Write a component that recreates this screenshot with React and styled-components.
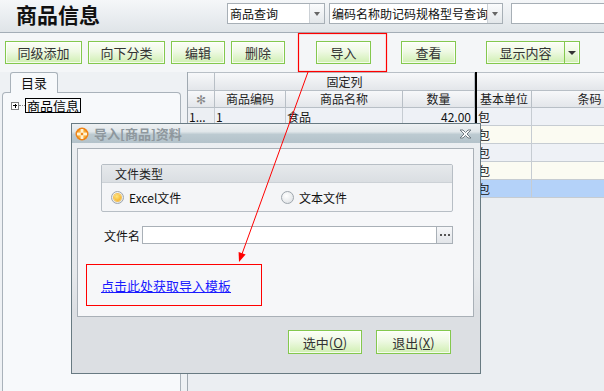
import React from 'react';
import styled, { createGlobalStyle } from 'styled-components';

const FONT = `"Noto Sans CJK SC", "Noto Sans", "DejaVu Sans", sans-serif`;

const GlobalStyle = createGlobalStyle`
  html, body { margin: 0; padding: 0; }
  body { font-family: ${FONT}; font-size: 12px; color: #222; background: #f4f6f8; }
  * { box-sizing: border-box; }
`;

const Screen = styled.div`
  position: relative;
  width: 604px;
  height: 391px;
  overflow: hidden;
  background: #f4f6f8;
`;

/* ---------- header ---------- */
const Header = styled.header`
  height: 33px;
  display: flex;
  align-items: flex-start;
  border-bottom: 1px solid #a3adb6;
  background: linear-gradient(#f5f7f9, #dfe4e8);
`;
const Title = styled.h1`
  flex: 0 0 227px;
  height: 30px;
  margin: 0;
  padding-left: 16px;
  font-size: 21px;
  font-weight: bold;
  line-height: 28px;
  color: #111;
  white-space: nowrap;
`;
const ComboBox = styled.div`
  display: flex;
  flex: none;
  width: ${p => p.$w}px;
  height: 21px;
  margin-top: 3px;
  margin-left: ${p => p.$ml || 0}px;
  border: 1px solid #a7afb6;
  background: #fff;
`;
const ComboText = styled.span`
  flex: 1;
  padding-left: 2px;
  font-size: 12px;
  line-height: 19px;
  color: #111;
  white-space: nowrap;
  overflow: hidden;
`;
const ComboArrow = styled.span`
  flex: none;
  width: 15px;
  border-left: 1px solid #ccd1d6;
  background: linear-gradient(#fbfcfd, #e3e7ea);
  display: flex;
  align-items: center;
  justify-content: center;
  &::after {
    content: "";
    border-left: 3.5px solid transparent;
    border-right: 3.5px solid transparent;
    border-top: 4px solid #666;
  }
`;

/* ---------- toolbar ---------- */
const Toolbar = styled.div`
  display: flex;
  height: 39px;
  padding-top: 8px;
`;
const GreenButton = styled.button`
  flex: none;
  width: ${p => p.$w}px;
  height: ${p => p.$h || 23}px;
  margin-left: ${p => p.$ml || 0}px;
  padding: 0;
  border: 1px solid #84c84e;
  background: linear-gradient(#fcfef8 0%, #eef9e3 45%, #d0efb2 100%);
  box-shadow: inset 0 0 0 1px rgba(255, 255, 255, 0.75);
  font-family: ${FONT};
  font-size: 13px;
  line-height: 1;
  color: #333;
  & u { text-decoration: underline; }
`;
const SplitButton = styled.div`
  display: flex;
  flex: none;
  margin-left: ${p => p.$ml}px;
  height: 23px;
  border: 1px solid #84c84e;
  background: linear-gradient(#fcfef8 0%, #eef9e3 45%, #d0efb2 100%);
  box-shadow: inset 0 0 0 1px rgba(255, 255, 255, 0.75);
`;
const SplitMain = styled.span`
  width: 77px;
  display: flex;
  align-items: center;
  justify-content: center;
  font-size: 13px;
  color: #333;
`;
const SplitArrow = styled.span`
  width: 15px;
  border-left: 1px solid #84c84e;
  display: flex;
  align-items: center;
  justify-content: center;
  &::after {
    content: "";
    border-left: 4px solid transparent;
    border-right: 4px solid transparent;
    border-top: 4px solid #333;
  }
`;

/* ---------- main ---------- */
const Main = styled.div`
  display: flex;
  height: 319px;
`;
const Sidebar = styled.aside`
  flex: none;
  width: 187px;
  display: flex;
  flex-direction: column;
  background: #eef1f4;
`;
const TabStrip = styled.div`
  height: 20px;
  padding-left: 10px;
  display: flex;
  align-items: flex-start;
  position: relative;
  z-index: 1;
`;
const Tab = styled.div`
  width: 48px;
  height: 21px;
  border: 1px solid #a9b2ba;
  border-bottom: none;
  border-radius: 3px 3px 0 0;
  background: #f7f9fb;
  font-size: 13px;
  line-height: 19px;
  text-align: center;
  color: #111;
`;
const TreePanel = styled.div`
  flex: 1;
  width: 179px;
  margin-left: 2px;
  border: 1px solid #a9b2ba;
  border-bottom: none;
  border-radius: 4px 4px 0 0;
  background: #f7f9fb;
  padding: 5px 0 0 8px;
`;
const TreeItem = styled.div`
  display: flex;
  align-items: center;
`;
const Expander = styled.span`
  width: 8px;
  height: 8px;
  border: 1px solid #808080;
  background: #fff;
  position: relative;
  &::before, &::after {
    content: "";
    position: absolute;
    background: #000;
  }
  &::before { left: 1px; top: 2.5px; width: 4px; height: 1px; }
  &::after { left: 2.5px; top: 1px; width: 1px; height: 4px; }
`;
const Dots = styled.span`
  width: 6px;
  border-top: 1px dotted #888;
`;
const TreeLabel = styled.span`
  border: 1px solid #000;
  padding: 0 1px;
  font-size: 13px;
  line-height: 13px;
  color: #000;
`;

const GridArea = styled.section`
  flex: 1;
  min-width: 0;
  overflow: hidden;
  border-left: 1px solid #a0a9b1;
  background: #ebeef2;
`;
const GridRow = styled.div`
  display: grid;
  grid-template-columns: 27px 71px 117px 72px 2px 55px 116px;
  height: ${p => p.$h}px;
  width: 460px;
`;
const HeadCell = styled.div`
  grid-column: span ${p => p.$span || 1};
  border-right: 1px solid #b8bfc6;
  border-bottom: 1px solid #b8bfc6;
  border-top: ${p => (p.$top ? '1px solid #b8bfc6' : 'none')};
  background: linear-gradient(#f7f8fa, #e3e6ea);
  font-size: 12px;
  line-height: ${p => p.$lh}px;
  text-align: center;
  color: ${p => (p.$muted ? '#888' : '#222')};
  white-space: nowrap;
  overflow: hidden;
`;
const Freeze = styled.div`
  background: #000;
`;
const rowBg = { blue: '#eef1f6', cream: '#fbfbf2', sel: '#b4d2f9' };
const Cell = styled.div`
  border-right: 1px solid #c6ccd2;
  border-bottom: 1px solid #c6ccd2;
  background: ${p => (p.$ind ? '#eceff3' : rowBg[p.$bg])};
  padding: 0 ${p => (p.$right ? 3 : 1)}px 0 1px;
  font-size: 12px;
  line-height: 17px;
  text-align: ${p => (p.$right ? 'right' : 'left')};
  color: #111;
  white-space: nowrap;
  overflow: hidden;
`;

/* ---------- dialog ---------- */
const Dialog = styled.div`
  position: absolute;
  left: 71px;
  top: 123px;
  width: 410px;
  height: 251px;
  border: 1px solid #687a82;
  display: flex;
  flex-direction: column;
  background: linear-gradient(#eceff2 0%, #e6e9ec 60%, #dcdfe3 75%);
  z-index: 2;
`;
const TitleBar = styled.div`
  height: 19px;
  display: flex;
  align-items: center;
  padding: 0 8px 0 3px;
  background: linear-gradient(#eef1f3 0%, #e1e7ea 40%, #bccad1 55%, #b3c2ca 100%);
`;
const TitleText = styled.span`
  flex: 1;
  margin-left: 5px;
  font-size: 13px;
  font-weight: bold;
  color: #8e979d;
  line-height: 19px;
`;
const DialogBody = styled.div`
  flex: 1;
  display: flex;
  flex-direction: column;
  padding: 5px 6px 0 5px;
`;
const ContentPanel = styled.div`
  height: 169px;
  border: 1px solid #a9b0b7;
  background: #f6f7f9;
  padding: 15px 20px 0 8px;
`;
const GroupBox = styled.div`
  margin-left: 15px;
  height: 48px;
  border: 1px solid #b7bec5;
  border-radius: 2px;
  background: #f4f5f7;
`;
const GroupHead = styled.div`
  height: 18px;
  padding-left: 13px;
  border-bottom: 1px solid #ccd1d6;
  background: linear-gradient(#e6e9ec, #dadee2);
  font-size: 12px;
  line-height: 17px;
  color: #222;
`;
const GroupBody = styled.div`
  height: 28px;
  display: flex;
  align-items: center;
  padding-left: 9px;
`;
const RadioItem = styled.label`
  display: flex;
  align-items: center;
  gap: 5px;
  width: ${p => p.$w || 'auto'};
  font-size: 12px;
  color: #111;
`;
const RadioCircle = styled.span`
  width: 13px;
  height: 13px;
  border-radius: 50%;
  border: 1px solid #9ea6ad;
  background: radial-gradient(circle at 40% 35%, #ffffff, #d9dde1);
  display: flex;
  align-items: center;
  justify-content: center;
  &::after {
    content: "";
    width: 7px;
    height: 7px;
    border-radius: 50%;
    display: ${p => (p.$checked ? 'block' : 'none')};
    background: radial-gradient(circle at 40% 35%, #ffe680, #f2a20e);
    box-shadow: 0 0 0 1px #f3c25a;
  }
`;
const FileRow = styled.div`
  display: flex;
  align-items: center;
  margin: 14px 0 0 18px;
`;
const FileLabel = styled.span`
  width: 38px;
  font-size: 12px;
  color: #111;
`;
const FileInput = styled.div`
  display: flex;
  width: 311px;
  height: 18px;
  border: 1px solid #a9b0b7;
  background: #fff;
`;
const FileField = styled.span`
  flex: 1;
`;
const Browse = styled.span`
  flex: none;
  width: 16px;
  border-left: 1px solid #a9b0b7;
  background: linear-gradient(#f6f7f9, #e2e5e9);
  display: flex;
  align-items: center;
  justify-content: center;
  gap: 2px;
`;
const BrowseDot = styled.i`
  width: 2px;
  height: 2px;
  background: #555;
`;
const LinkBox = styled.div`
  margin-top: 20px;
  width: 176px;
  height: 42px;
  border: 1px solid #ff0000;
  display: flex;
  align-items: center;
  padding-left: 14px;
`;
const TemplateLink = styled.a`
  font-size: 13px;
  color: #1a1aff;
  text-decoration: underline;
  cursor: pointer;
`;
const Footer = styled.div`
  flex: 1;
  display: flex;
  justify-content: flex-end;
  align-items: flex-start;
  gap: 14px;
  padding: 13px 23px 0 0;
`;

const Overlay = styled.svg`
  position: absolute;
  left: 0;
  top: 0;
  width: 604px;
  height: 391px;
  pointer-events: none;
  z-index: 3;
`;

const DialogIcon = () => (
  <svg width="14" height="14" viewBox="0 0 14 14">
    <circle cx="7" cy="7" r="6.5" fill="#ee8418" />
    <circle cx="7" cy="7" r="4.6" fill="#f9b23b" />
    <rect x="5.6" y="2" width="2.8" height="10" fill="#fff3d6" />
    <rect x="2" y="5.6" width="10" height="2.8" fill="#fff3d6" />
    <rect x="5.8" y="5.8" width="2.4" height="2.4" fill="#f08a1c" />
  </svg>
);

const CloseIcon = () => (
  <svg width="13" height="10" viewBox="0 0 13 10">
    <path
      d="M1 1 L4 1 L6.5 3.5 L9 1 L12 1 L8 5 L12 9 L9 9 L6.5 6.5 L4 9 L1 9 L5 5 Z"
      fill="#fafbfc"
      stroke="#6f7a82"
      strokeWidth="1"
      strokeLinejoin="round"
    />
  </svg>
);

const rows = [
  { bg: 'blue', ind: '1...', code: '1', name: '食品', qty: '42.00', unit: '包' },
  { bg: 'cream', unit: '包' },
  { bg: 'blue', unit: '包' },
  { bg: 'cream', unit: '包' },
  { bg: 'sel', unit: '包' },
];

export default function App() {
  return (
    <>
      <GlobalStyle />
      <Screen>
        <Header>
          <Title>商品信息</Title>
          <ComboBox $w={98}>
            <ComboText>商品查询</ComboText>
            <ComboArrow />
          </ComboBox>
          <ComboBox $w={174} $ml={4}>
            <ComboText>编码名称助记码规格型号查询</ComboText>
            <ComboArrow />
          </ComboBox>
          <ComboBox $w={100} $ml={8} />
        </Header>

        <Toolbar>
          <GreenButton $w={77} $ml={5}>同级添加</GreenButton>
          <GreenButton $w={77} $ml={6}>向下分类</GreenButton>
          <GreenButton $w={54} $ml={6}>编辑</GreenButton>
          <GreenButton $w={54} $ml={6}>删除</GreenButton>
          <GreenButton $w={55} $ml={31}>导入</GreenButton>
          <GreenButton $w={55} $ml={30}>查看</GreenButton>
          <SplitButton $ml={30}>
            <SplitMain>显示内容</SplitMain>
            <SplitArrow />
          </SplitButton>
        </Toolbar>

        <Main>
          <Sidebar>
            <TabStrip>
              <Tab>目录</Tab>
            </TabStrip>
            <TreePanel>
              <TreeItem>
                <Expander />
                <Dots />
                <TreeLabel>商品信息</TreeLabel>
              </TreeItem>
            </TreePanel>
          </Sidebar>

          <GridArea>
            <GridRow $h={19}>
              <HeadCell $top $lh={17} />
              <HeadCell $top $span={3} $lh={17}>固定列</HeadCell>
              <Freeze />
              <HeadCell $top $span={2} $lh={17} />
            </GridRow>
            <GridRow $h={17}>
              <HeadCell $lh={16} $muted>✻</HeadCell>
              <HeadCell $lh={16}>商品编码</HeadCell>
              <HeadCell $lh={16}>商品名称</HeadCell>
              <HeadCell $lh={16}>数量</HeadCell>
              <Freeze />
              <HeadCell $lh={16}>基本单位</HeadCell>
              <HeadCell $lh={16}>条码</HeadCell>
            </GridRow>
            {rows.map((r, i) => (
              <GridRow key={i} $h={18}>
                <Cell $ind>{r.ind}</Cell>
                <Cell $bg={r.bg}>{r.code}</Cell>
                <Cell $bg={r.bg}>{r.name}</Cell>
                <Cell $bg={r.bg} $right>{r.qty}</Cell>
                <Freeze />
                <Cell $bg={r.bg}>{r.unit}</Cell>
                <Cell $bg={r.bg} />
              </GridRow>
            ))}
          </GridArea>
        </Main>

        <Dialog>
          <TitleBar>
            <DialogIcon />
            <TitleText>导入[商品]资料</TitleText>
            <CloseIcon />
          </TitleBar>
          <DialogBody>
            <ContentPanel>
              <GroupBox>
                <GroupHead>文件类型</GroupHead>
                <GroupBody>
                  <RadioItem $w="170px">
                    <RadioCircle $checked />
                    Excel文件
                  </RadioItem>
                  <RadioItem>
                    <RadioCircle />
                    文本文件
                  </RadioItem>
                </GroupBody>
              </GroupBox>
              <FileRow>
                <FileLabel>文件名</FileLabel>
                <FileInput>
                  <FileField />
                  <Browse>
                    <BrowseDot />
                    <BrowseDot />
                    <BrowseDot />
                  </Browse>
                </FileInput>
              </FileRow>
              <LinkBox>
                <TemplateLink>点击此处获取导入模板</TemplateLink>
              </LinkBox>
            </ContentPanel>
            <Footer>
              <GreenButton $w={74} $h={24}>选中(<u>O</u>)</GreenButton>
              <GreenButton $w={75} $h={24}>退出(<u>X</u>)</GreenButton>
            </Footer>
          </DialogBody>
        </Dialog>

        <Overlay viewBox="0 0 604 391">
          <rect x="298.5" y="33.5" width="88" height="38" fill="none" stroke="#ff0000" strokeWidth="1.2" />
          <line x1="308" y1="72" x2="242" y2="254" stroke="#ff0000" strokeWidth="1" />
          <polygon points="239,262 245.6,254.6 238.6,252.1" fill="#ff0000" />
        </Overlay>
      </Screen>
    </>
  );
}
